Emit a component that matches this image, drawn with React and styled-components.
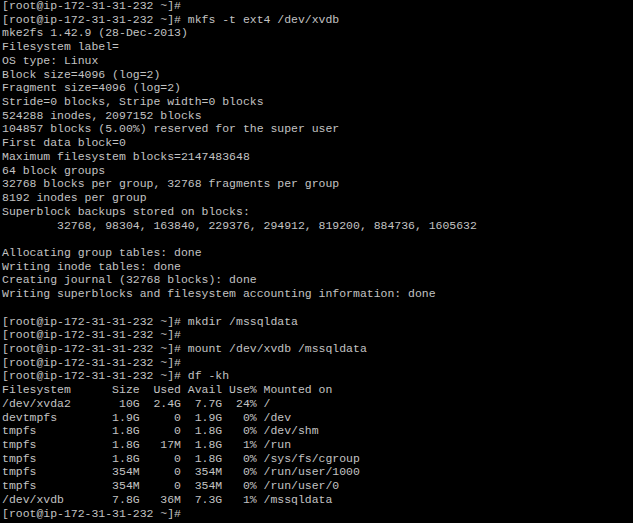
import React from 'react';
import styled, { createGlobalStyle } from 'styled-components';

const GlobalStyle = createGlobalStyle`
  html, body {
    margin: 0;
    padding: 0;
    background: #000;
  }
`;

const Terminal = styled.div`
  width: 633px;
  height: 523px;
  overflow: hidden;
  background: #000;
  color: #c3c3c3;
  padding: 0 0 0 2px;
  box-sizing: border-box;
`;

const Output = styled.pre`
  margin: -1px 0 0;
  font-family: 'Liberation Mono', 'Courier New', monospace;
  font-size: 11.47px;
  line-height: 13.72px;
  white-space: pre;
`;

const lines = [
  '[root@ip-172-31-31-232 ~]#',
  '[root@ip-172-31-31-232 ~]# mkfs -t ext4 /dev/xvdb',
  'mke2fs 1.42.9 (28-Dec-2013)',
  'Filesystem label=',
  'OS type: Linux',
  'Block size=4096 (log=2)',
  'Fragment size=4096 (log=2)',
  'Stride=0 blocks, Stripe width=0 blocks',
  '524288 inodes, 2097152 blocks',
  '104857 blocks (5.00%) reserved for the super user',
  'First data block=0',
  'Maximum filesystem blocks=2147483648',
  '64 block groups',
  '32768 blocks per group, 32768 fragments per group',
  '8192 inodes per group',
  'Superblock backups stored on blocks:',
  '        32768, 98304, 163840, 229376, 294912, 819200, 884736, 1605632',
  '',
  'Allocating group tables: done',
  'Writing inode tables: done',
  'Creating journal (32768 blocks): done',
  'Writing superblocks and filesystem accounting information: done',
  '',
  '[root@ip-172-31-31-232 ~]# mkdir /mssqldata',
  '[root@ip-172-31-31-232 ~]#',
  '[root@ip-172-31-31-232 ~]# mount /dev/xvdb /mssqldata',
  '[root@ip-172-31-31-232 ~]#',
  '[root@ip-172-31-31-232 ~]# df -kh',
  'Filesystem      Size  Used Avail Use% Mounted on',
  '/dev/xvda2       10G  2.4G  7.7G  24% /',
  'devtmpfs        1.9G     0  1.9G   0% /dev',
  'tmpfs           1.8G     0  1.8G   0% /dev/shm',
  'tmpfs           1.8G   17M  1.8G   1% /run',
  'tmpfs           1.8G     0  1.8G   0% /sys/fs/cgroup',
  'tmpfs           354M     0  354M   0% /run/user/1000',
  'tmpfs           354M     0  354M   0% /run/user/0',
  '/dev/xvdb       7.8G   36M  7.3G   1% /mssqldata',
  '[root@ip-172-31-31-232 ~]#',
];

const App = () => {
  return (
    <>
      <GlobalStyle />
      <Terminal>
        <Output>{lines.join('\n')}</Output>
      </Terminal>
    </>
  );
};

export default App;
